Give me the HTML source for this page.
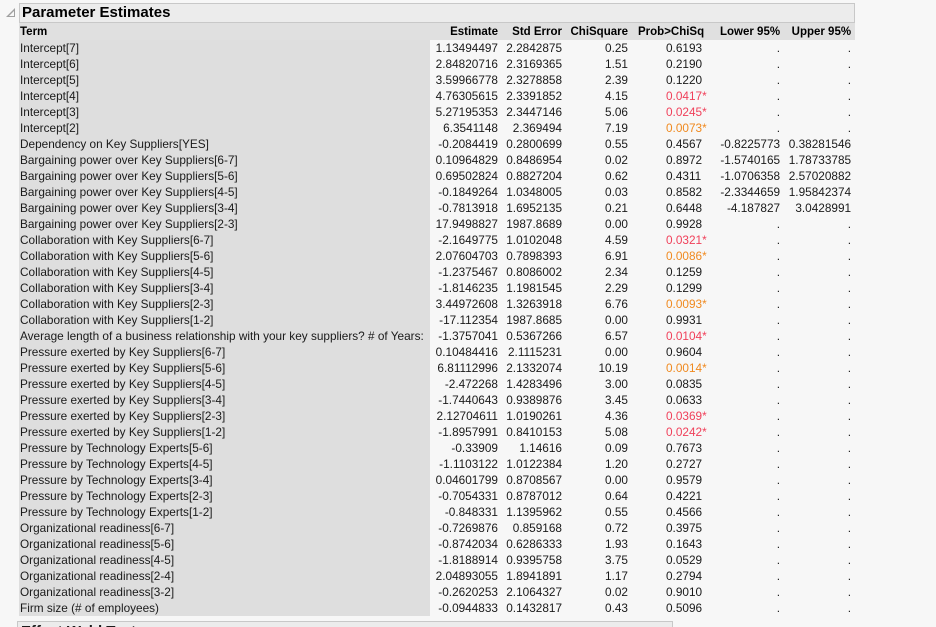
<!DOCTYPE html>
<html><head><meta charset="utf-8"><style>
html,body{margin:0;width:936px;height:627px;overflow:hidden}
body{background:#f7f7f7;font-family:"Liberation Sans",sans-serif;font-size:11.8px;color:#1a1a1a;position:relative}
.hdr{position:absolute;left:19px;top:3px;width:832px;height:18px;border:1px solid #c8c8c8;background:#ececec;font-weight:bold;font-size:15px;line-height:18px;padding-left:2px;color:#000}
.tri{position:absolute;left:6px;top:8px;width:0;height:0;border-left:9px solid transparent;border-bottom:9px solid #a0a0a0}
.tri:after{content:"";position:absolute;left:-6px;top:3px;border-left:5px solid transparent;border-bottom:5px solid #f7f7f7}
table{position:absolute;left:19px;top:23px;border-collapse:collapse;table-layout:fixed}
td{padding:0;height:16px;line-height:16px;white-space:nowrap;text-align:right}
tr.h td{background:#e0e0e0;font-weight:bold;height:17px;color:#000;font-size:11.5px}
td.t{text-align:left;background:#dedede;padding-left:1px;width:410px}
tr.h td.t{background:#e0e0e0}
td.p{text-align:left;padding-left:38px}
tr.h td.p{padding-left:10px}
td.u{padding-right:4px}
.r{color:#f0405a}.o{color:#f08a20}
.bot{position:absolute;left:17px;top:621px;width:651px;height:20px;border:1px solid #c8c8c8;background:#ececec;font-weight:bold;font-size:15px;padding-left:3px;line-height:20px}
</style></head><body>
<div class="tri"></div>
<div class="hdr">Parameter Estimates</div>
<table>
<colgroup><col style="width:411px"><col style="width:68px"><col style="width:64px"><col style="width:66px"><col style="width:92px"><col style="width:57px"><col style="width:75px"></colgroup>
<tr class="h"><td class="t">Term</td><td>Estimate</td><td>Std Error</td><td>ChiSquare</td><td class="p">Prob&gt;ChiSq</td><td>Lower 95%</td><td class="u">Upper 95%</td></tr>
<tr><td class="t">Intercept[7]</td><td>1.13494497</td><td>2.2842875</td><td>0.25</td><td class="p">0.6193</td><td>.</td><td class="u">.</td></tr>
<tr><td class="t">Intercept[6]</td><td>2.84820716</td><td>2.3169365</td><td>1.51</td><td class="p">0.2190</td><td>.</td><td class="u">.</td></tr>
<tr><td class="t">Intercept[5]</td><td>3.59966778</td><td>2.3278858</td><td>2.39</td><td class="p">0.1220</td><td>.</td><td class="u">.</td></tr>
<tr><td class="t">Intercept[4]</td><td>4.76305615</td><td>2.3391852</td><td>4.15</td><td class="p r">0.0417*</td><td>.</td><td class="u">.</td></tr>
<tr><td class="t">Intercept[3]</td><td>5.27195353</td><td>2.3447146</td><td>5.06</td><td class="p r">0.0245*</td><td>.</td><td class="u">.</td></tr>
<tr><td class="t">Intercept[2]</td><td>6.3541148</td><td>2.369494</td><td>7.19</td><td class="p o">0.0073*</td><td>.</td><td class="u">.</td></tr>
<tr><td class="t">Dependency on Key Suppliers[YES]</td><td>-0.2084419</td><td>0.2800699</td><td>0.55</td><td class="p">0.4567</td><td>-0.8225773</td><td class="u">0.38281546</td></tr>
<tr><td class="t">Bargaining power over Key Suppliers[6-7]</td><td>0.10964829</td><td>0.8486954</td><td>0.02</td><td class="p">0.8972</td><td>-1.5740165</td><td class="u">1.78733785</td></tr>
<tr><td class="t">Bargaining power over Key Suppliers[5-6]</td><td>0.69502824</td><td>0.8827204</td><td>0.62</td><td class="p">0.4311</td><td>-1.0706358</td><td class="u">2.57020882</td></tr>
<tr><td class="t">Bargaining power over Key Suppliers[4-5]</td><td>-0.1849264</td><td>1.0348005</td><td>0.03</td><td class="p">0.8582</td><td>-2.3344659</td><td class="u">1.95842374</td></tr>
<tr><td class="t">Bargaining power over Key Suppliers[3-4]</td><td>-0.7813918</td><td>1.6952135</td><td>0.21</td><td class="p">0.6448</td><td>-4.187827</td><td class="u">3.0428991</td></tr>
<tr><td class="t">Bargaining power over Key Suppliers[2-3]</td><td>17.9498827</td><td>1987.8689</td><td>0.00</td><td class="p">0.9928</td><td>.</td><td class="u">.</td></tr>
<tr><td class="t">Collaboration with Key Suppliers[6-7]</td><td>-2.1649775</td><td>1.0102048</td><td>4.59</td><td class="p r">0.0321*</td><td>.</td><td class="u">.</td></tr>
<tr><td class="t">Collaboration with Key Suppliers[5-6]</td><td>2.07604703</td><td>0.7898393</td><td>6.91</td><td class="p o">0.0086*</td><td>.</td><td class="u">.</td></tr>
<tr><td class="t">Collaboration with Key Suppliers[4-5]</td><td>-1.2375467</td><td>0.8086002</td><td>2.34</td><td class="p">0.1259</td><td>.</td><td class="u">.</td></tr>
<tr><td class="t">Collaboration with Key Suppliers[3-4]</td><td>-1.8146235</td><td>1.1981545</td><td>2.29</td><td class="p">0.1299</td><td>.</td><td class="u">.</td></tr>
<tr><td class="t">Collaboration with Key Suppliers[2-3]</td><td>3.44972608</td><td>1.3263918</td><td>6.76</td><td class="p o">0.0093*</td><td>.</td><td class="u">.</td></tr>
<tr><td class="t">Collaboration with Key Suppliers[1-2]</td><td>-17.112354</td><td>1987.8685</td><td>0.00</td><td class="p">0.9931</td><td>.</td><td class="u">.</td></tr>
<tr><td class="t">Average length of a business relationship with your key suppliers? # of Years:</td><td>-1.3757041</td><td>0.5367266</td><td>6.57</td><td class="p r">0.0104*</td><td>.</td><td class="u">.</td></tr>
<tr><td class="t">Pressure exerted by Key Suppliers[6-7]</td><td>0.10484416</td><td>2.1115231</td><td>0.00</td><td class="p">0.9604</td><td>.</td><td class="u">.</td></tr>
<tr><td class="t">Pressure exerted by Key Suppliers[5-6]</td><td>6.81112996</td><td>2.1332074</td><td>10.19</td><td class="p o">0.0014*</td><td>.</td><td class="u">.</td></tr>
<tr><td class="t">Pressure exerted by Key Suppliers[4-5]</td><td>-2.472268</td><td>1.4283496</td><td>3.00</td><td class="p">0.0835</td><td>.</td><td class="u">.</td></tr>
<tr><td class="t">Pressure exerted by Key Suppliers[3-4]</td><td>-1.7440643</td><td>0.9389876</td><td>3.45</td><td class="p">0.0633</td><td>.</td><td class="u">.</td></tr>
<tr><td class="t">Pressure exerted by Key Suppliers[2-3]</td><td>2.12704611</td><td>1.0190261</td><td>4.36</td><td class="p r">0.0369*</td><td>.</td><td class="u">.</td></tr>
<tr><td class="t">Pressure exerted by Key Suppliers[1-2]</td><td>-1.8957991</td><td>0.8410153</td><td>5.08</td><td class="p r">0.0242*</td><td>.</td><td class="u">.</td></tr>
<tr><td class="t">Pressure by Technology Experts[5-6]</td><td>-0.33909</td><td>1.14616</td><td>0.09</td><td class="p">0.7673</td><td>.</td><td class="u">.</td></tr>
<tr><td class="t">Pressure by Technology Experts[4-5]</td><td>-1.1103122</td><td>1.0122384</td><td>1.20</td><td class="p">0.2727</td><td>.</td><td class="u">.</td></tr>
<tr><td class="t">Pressure by Technology Experts[3-4]</td><td>0.04601799</td><td>0.8708567</td><td>0.00</td><td class="p">0.9579</td><td>.</td><td class="u">.</td></tr>
<tr><td class="t">Pressure by Technology Experts[2-3]</td><td>-0.7054331</td><td>0.8787012</td><td>0.64</td><td class="p">0.4221</td><td>.</td><td class="u">.</td></tr>
<tr><td class="t">Pressure by Technology Experts[1-2]</td><td>-0.848331</td><td>1.1395962</td><td>0.55</td><td class="p">0.4566</td><td>.</td><td class="u">.</td></tr>
<tr><td class="t">Organizational readiness[6-7]</td><td>-0.7269876</td><td>0.859168</td><td>0.72</td><td class="p">0.3975</td><td>.</td><td class="u">.</td></tr>
<tr><td class="t">Organizational readiness[5-6]</td><td>-0.8742034</td><td>0.6286333</td><td>1.93</td><td class="p">0.1643</td><td>.</td><td class="u">.</td></tr>
<tr><td class="t">Organizational readiness[4-5]</td><td>-1.8188914</td><td>0.9395758</td><td>3.75</td><td class="p">0.0529</td><td>.</td><td class="u">.</td></tr>
<tr><td class="t">Organizational readiness[2-4]</td><td>2.04893055</td><td>1.8941891</td><td>1.17</td><td class="p">0.2794</td><td>.</td><td class="u">.</td></tr>
<tr><td class="t">Organizational readiness[3-2]</td><td>-0.2620253</td><td>2.1064327</td><td>0.02</td><td class="p">0.9010</td><td>.</td><td class="u">.</td></tr>
<tr><td class="t">Firm size (# of employees)</td><td>-0.0944833</td><td>0.1432817</td><td>0.43</td><td class="p">0.5096</td><td>.</td><td class="u">.</td></tr>
</table>
<div class="bot">Effect Wald Tests</div>
</body></html>
